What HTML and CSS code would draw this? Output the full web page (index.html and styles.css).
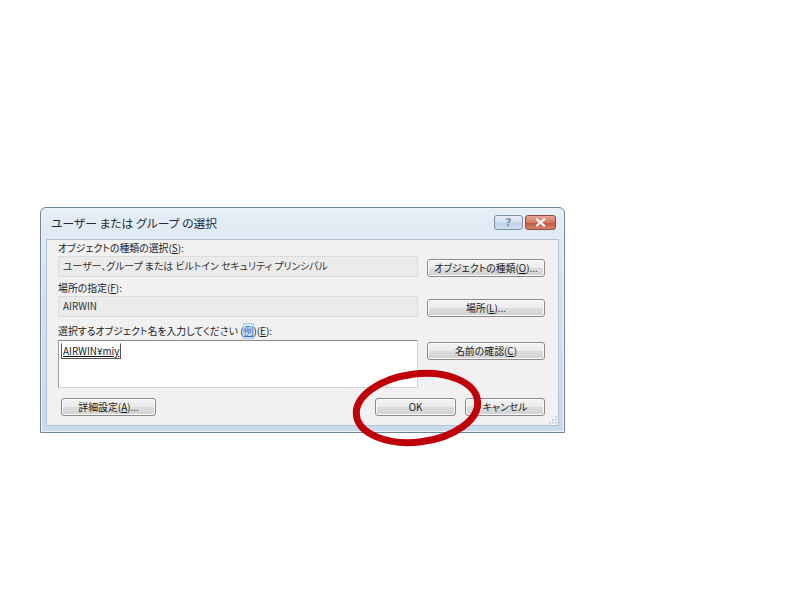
FILE: index.html
```html
<!DOCTYPE html>
<html lang="ja">
<head>
    <meta charset="UTF-8">
    <title>ユーザー または グループ の選択</title>
    <link rel="stylesheet" href="styles.css">
</head>
<body>
    <!-- Dialog window -->
    <div class="dialog">
        <div class="titlebar">
            <span class="title">ユーザー または グループ の選択</span>
            <div class="title-buttons">
                <div class="tb-btn help">?</div>
                <div class="tb-btn close">
                    <svg width="11" height="9" viewBox="0 0 11 9">
                        <path d="M2 1.5 L9 7.5 M9 1.5 L2 7.5" stroke="#fff" stroke-width="2.2" stroke-linecap="square"/>
                    </svg>
                </div>
            </div>
        </div>

        <div class="client">
            <div class="label">オブジェクトの種類の選択(<u>S</u>):</div>
            <div class="field-row">
                <div class="field">ユーザー、グループ または ビルトイン セキュリティ プリンシパル</div>
                <button class="btn wide">オブジェクトの種類(<u>O</u>)...</button>
            </div>

            <div class="label">場所の指定(<u>F</u>):</div>
            <div class="field-row">
                <div class="field">AIRWIN</div>
                <button class="btn wide">場所(<u>L</u>)...</button>
            </div>

            <div class="label third">選択するオブジェクト名を入力してください (<span class="link">例</span>)(<u>E</u>):</div>
            <div class="field-row top">
                <div class="names"><span class="name">AIRWIN¥miy</span></div>
                <button class="btn wide check">名前の確認(<u>C</u>)</button>
            </div>

            <div class="bottom-row">
                <button class="btn advanced">詳細設定(<u>A</u>)...</button>
                <button class="btn ok">OK</button>
                <button class="btn cancel">キャンセル</button>
            </div>

            <div class="grip">
                <svg width="8" height="8" viewBox="0 0 8 8">
                    <rect x="6" y="0" width="1.5" height="1.5" fill="#b8c0c8"/>
                    <rect x="3" y="3" width="1.5" height="1.5" fill="#b8c0c8"/>
                    <rect x="6" y="3" width="1.5" height="1.5" fill="#b8c0c8"/>
                    <rect x="0" y="6" width="1.5" height="1.5" fill="#b8c0c8"/>
                    <rect x="3" y="6" width="1.5" height="1.5" fill="#b8c0c8"/>
                    <rect x="6" y="6" width="1.5" height="1.5" fill="#b8c0c8"/>
                </svg>
            </div>
        </div>
    </div>

    <!-- red marker round the OK button -->
    <svg class="marker" width="160" height="100" viewBox="0 0 160 100">
        <ellipse cx="77" cy="48" rx="61" ry="34" transform="rotate(-7 77 48)"
                 fill="none" stroke="#c00008" stroke-width="7"/>
    </svg>
</body>
</html>
```

FILE: styles.css
```css
* {
    box-sizing: border-box;
}

body {
    margin: 0;
    background: #fff;
    font-family: "Noto Sans CJK JP", "Noto Sans", sans-serif;
    font-feature-settings: "palt";
    color: #1a1a1a;
    position: relative;
    min-height: 600px;
}

/* Window frame */
.dialog {
    margin: 207px 0 0 40px;
    width: 525px;
    height: 226px;
    border: 1px solid #6f8397;
    border-radius: 6px 6px 0 0;
    background: linear-gradient(#e6eef6, #d3e1ee 40%, #c9daea);
    padding: 0 5px 6px 5px;
    display: flex;
    flex-direction: column;
    position: relative;
    box-shadow: inset 0 0 0 1px #eef4fa;
}

.titlebar {
    height: 31px;
    flex-shrink: 0;
    display: flex;
    align-items: flex-start;
    padding-left: 5px;
}

.title {
    font-size: 11.8px;
    line-height: 14px;
    margin-top: 8px;
    color: #1d2a36;
}

.title-buttons {
    margin-left: auto;
    margin-top: 7px;
    margin-right: 3px;
    display: flex;
    gap: 2px;
}

.tb-btn {
    height: 15px;
    border: 1px solid #7d92a8;
    border-radius: 3px;
    display: flex;
    align-items: center;
    justify-content: center;
}

.help {
    width: 29px;
    background: linear-gradient(#e8f0f8, #cddcec 50%, #bccfe3 51%, #cfe0f0);
    color: #8494a6;
    font-size: 11px;
    font-weight: bold;
    line-height: 13px;
    font-family: "DejaVu Sans", sans-serif;
}

.close {
    width: 31px;
    border-color: #8c4b45;
    background: linear-gradient(#e8a79a, #d67664 50%, #c4503a 51%, #d8826c);
}

/* Client area */
.client {
    flex: 1;
    background: #f1f1f1;
    border: 1px solid #b3c3d3;
    padding: 1px 13px 0 11px;
    position: relative;
    font-size: 9.9px;
}

.label {
    height: 15px;
    line-height: 15px;
}

.field-row {
    display: flex;
    align-items: flex-end;
    gap: 9px;
    margin-bottom: 4px;
}

.field-row.top {
    align-items: flex-start;
}

.field {
    width: 360px;
    height: 21px;
    line-height: 19px;
    padding-left: 4px;
    background: #ebebeb;
    border: 1px solid #dcdcdc;
    color: #333;
    white-space: nowrap;
    overflow: hidden;
}

.label.third {
    margin-top: 6px;
    height: 17px;
    line-height: 17px;
}

.link {
    color: #2a6fd0;
    text-decoration: underline;
    background: #d8e8f8;
    outline: 1px solid #a6c8ec;
}

.names {
    width: 360px;
    height: 48px;
    background: #fff;
    border: 1px solid #d4d4d4;
    border-top-color: #8a8a8a;
    border-left-color: #9a9a9a;
    padding: 2px 0 0 2px;
}

.name {
    display: inline-block;
    line-height: 14px;
    padding: 0 1px;
    border: 1px solid #555;
    border-top-color: transparent;
    text-decoration: underline;
}

.btn {
    font-family: inherit;
    font-feature-settings: "palt";
    font-size: 9.9px;
    color: #1a1a1a;
    height: 18px;
    padding: 0;
    border: 1px solid #8a8a8a;
    border-radius: 3px;
    background: linear-gradient(#f4f4f4, #ebebeb 48%, #dcdcdc 52%, #d2d2d2);
    box-shadow: inset 0 0 0 1px #fbfbfb;
    line-height: 15px;
}

.btn.wide {
    width: 118px;
}

.btn.check {
    margin-top: 2px;
}

.bottom-row {
    display: flex;
    gap: 9px;
    margin-top: 10px;
}

.advanced {
    width: 95px;
    margin-left: 3px;
    margin-right: auto;
}

.ok {
    width: 81px;
}

.cancel {
    width: 80px;
}

.grip {
    position: absolute;
    right: 1px;
    bottom: 1px;
    line-height: 0;
}

/* annotation over the dialog */
.marker {
    position: absolute;
    left: 340px;
    top: 360px;
}
```
